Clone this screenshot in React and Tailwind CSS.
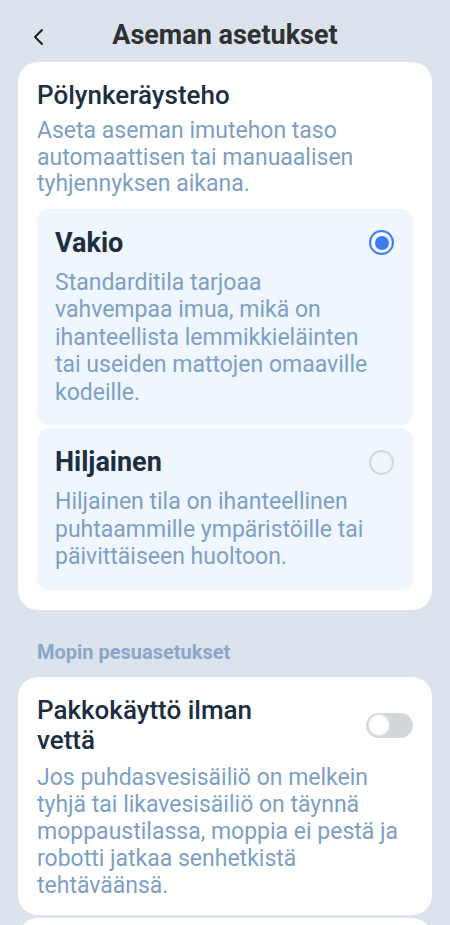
const font = { fontFamily: 'Roboto, "Noto Sans", sans-serif' }

function Radio({ checked }) {
  if (checked) {
    return (
      <div className="w-[25px] h-[25px] rounded-full border-2 border-[#3b7cf6] flex items-center justify-center shrink-0">
        <div className="w-[14px] h-[14px] rounded-full bg-[#3b7cf6]" />
      </div>
    )
  }
  return <div className="w-[25px] h-[25px] rounded-full border-2 border-[#d4d8dd] shrink-0" />
}

function Option({ title, text, checked }) {
  return (
    <div className="bg-[#f0f6fd] rounded-[12px] pl-[18px] pr-[19px] pt-[17px] pb-[19px]">
      <div className="flex items-center justify-between">
        <div className="text-[27px] leading-[34px] font-bold text-[#1c2e40]">{title}</div>
        <Radio checked={checked} />
      </div>
      <p className="mt-[9px] text-[23px] leading-[27.5px] text-[#7c9fc4] pr-[10px]">{text}</p>
    </div>
  )
}

export default function App() {
  return (
    <div className="h-screen bg-[#dce3ec] overflow-hidden" style={font}>
      <header className="relative h-[62px] flex items-center justify-center pt-[8px]">
        <button className="absolute left-[28px] top-[22px] p-1">
          <svg width="14" height="22" viewBox="0 0 14 22" fill="none">
            <path d="M10 4 L3 11 L10 18" stroke="#1f1f1f" strokeWidth="2" strokeLinecap="round" strokeLinejoin="round" />
          </svg>
        </button>
        <h1 className="text-[27px] font-bold text-[#2f3133]">Aseman asetukset</h1>
      </header>

      <main className="px-[18px]">
        <section className="bg-white rounded-[20px] px-[19px] pt-[16px] pb-[20px]">
          <h2 className="text-[26px] leading-[34px] font-medium text-[#1c2e40]">Pölynkeräysteho</h2>
          <p className="mt-[6px] text-[23px] leading-[26.5px] text-[#7c9fc4]">
            Aseta aseman imutehon taso automaattisen tai manuaalisen tyhjennyksen aikana.
          </p>
          <div className="mt-[11px] flex flex-col gap-[3px]">
            <Option
              checked
              title="Vakio"
              text="Standarditila tarjoaa vahvempaa imua, mikä on ihanteellista lemmikkieläinten tai useiden mattojen omaaville kodeille."
            />
            <Option
              title="Hiljainen"
              text="Hiljainen tila on ihanteellinen puhtaammille ympäristöille tai päivittäiseen huoltoon."
            />
          </div>
        </section>

        <div className="px-[19px] pt-[30px] pb-[13px] text-[20px] leading-[24px] font-bold text-[#8aa7c8]">
          Mopin pesuasetukset
        </div>

        <section className="bg-white rounded-[20px] px-[19px] pt-[18px] pb-[16px]">
          <div className="flex items-start justify-between">
            <h2 className="w-[260px] text-[26px] leading-[30px] font-medium text-[#1c2e40]">
              Pakkokäyttö ilman vettä
            </h2>
            <div className="mt-[18px] w-[47px] h-[25px] rounded-full bg-[#d3d7db] p-[1.5px] flex items-center">
              <div className="w-[22px] h-[22px] rounded-full bg-white border border-[#e2e5e8]" />
            </div>
          </div>
          <p className="mt-[9.5px] text-[23px] leading-[27px] text-[#7c9fc4]">
            Jos puhdasvesisäiliö on melkein tyhjä tai likavesisäiliö on täynnä moppaustilassa, moppia ei pestä ja robotti jatkaa senhetkistä tehtäväänsä.
          </p>
        </section>

        <section className="mt-[3px] bg-white rounded-t-[20px] h-[60px]" />
      </main>
    </div>
  )
}
